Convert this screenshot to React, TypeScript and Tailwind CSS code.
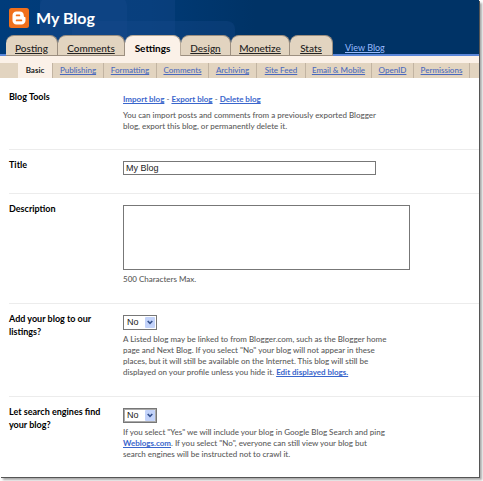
import { useState, type ReactNode } from "react";
import clsx from "clsx";

const tabs = [
  { label: "Posting", width: "w-[52px]" },
  { label: "Comments", width: "w-[67px]" },
  { label: "Settings", width: "w-[56px]" },
  { label: "Design", width: "w-[50px]" },
  { label: "Monetize", width: "w-[59px]" },
  { label: "Stats", width: "w-[43px]" },
];

const subTabs = [
  { label: "Basic", width: "w-[35px]" },
  { label: "Publishing", width: "w-[51px]" },
  { label: "Formatting", width: "w-[53px]" },
  { label: "Comments", width: "w-[52px]" },
  { label: "Archiving", width: "w-[48px]" },
  { label: "Site Feed", width: "w-[49px]" },
  { label: "Email & Mobile", width: "w-[66px]" },
  { label: "OpenID", width: "w-[42px]" },
  { label: "Permissions", width: "w-[56px]" },
];

export default function App() {
  return (
    <div className="min-h-screen bg-[#fcfcfc] pr-1 pb-1 font-['Lato',sans-serif]">
      <div className="min-h-[calc(100vh-4px)] bg-white shadow-[1px_1px_0_#555,3px_3px_2px_#aaa]">
        <Header />
        <SubNav />
        <main className="pl-[9px]">
          <Row label="Blog Tools" first>
            <p className="text-[8px] leading-[13px] text-[#555]">
              <TextLink>Import blog</TextLink> - <TextLink>Export blog</TextLink> -{" "}
              <TextLink>Delete blog</TextLink>
            </p>
            <Hint>
              You can import posts and comments from a previously exported Blogger
              <br />
              blog, export this blog, or permanently delete it.
            </Hint>
          </Row>
          <Row label="Title" htmlFor="title">
            <input
              id="title"
              defaultValue="My Blog"
              className="block h-[14px] w-[253px] border border-[#777] px-[2px] font-['Liberation_Sans',sans-serif] text-[9px] text-[#222] outline-none"
            />
          </Row>
          <Row label="Description" htmlFor="description">
            <textarea
              id="description"
              className="block h-[65px] w-[287px] resize-none border border-[#777] p-[2px] font-['Liberation_Sans',sans-serif] text-[9px] outline-none"
            />
            <Hint>500 Characters Max.</Hint>
          </Row>
          <Row label="Add your blog to our listings?" htmlFor="listed">
            <YesNo id="listed" />
            <Hint>
              A Listed blog may be linked to from Blogger.com, such as the Blogger home
              <br />
              page and Next Blog. If you select "No" your blog will not appear in these
              <br />
              places, but it will still be available on the Internet. This blog will still be
              <br />
              displayed on your profile unless you hide it. <TextLink>Edit displayed blogs.</TextLink>
            </Hint>
          </Row>
          <Row label="Let search engines find your blog?" htmlFor="searchable">
            <YesNo id="searchable" focused />
            <Hint>
              If you select "Yes" we will include your blog in Google Blog Search and ping
              <br />
              <TextLink>Weblogs.com</TextLink>. If you select "No", everyone can still view your blog but
              <br />
              search engines will be instructed not to crawl it.
            </Hint>
          </Row>
        </main>
      </div>
    </div>
  );
}

function Header() {
  return (
    <header className="relative overflow-hidden bg-[#003366]">
      <svg className="absolute top-0 left-0 h-[54px] w-[300px]" viewBox="0 0 300 54" aria-hidden="true">
        <defs>
          <linearGradient id="glow" x1="0" x2="1">
            <stop offset="0" stopColor="#003c7b" />
            <stop offset="0.5" stopColor="#003a76" />
            <stop offset="0.85" stopColor="#003366" />
          </linearGradient>
        </defs>
        <rect width="300" height="54" fill="url(#glow)" />
        <rect x="40" y="-10" width="135" height="90" rx="10" fill="#1a4d90" fillOpacity="0.3" />
        <rect x="40" y="-4" width="87" height="80" rx="10" fill="#1a4d90" fillOpacity="0.3" />
        <rect x="72" y="21" width="163" height="60" rx="8" fill="#1a4d90" fillOpacity="0.3" />
      </svg>
      <div className="relative flex h-[35px] items-center gap-[7px] pl-[9px]">
        <Logo />
        <h1 className="text-[16px] leading-5 font-bold text-white">My Blog</h1>
      </div>
      <nav className="relative flex h-[21px] items-stretch border-b-2 border-[#5a86d8] pl-[6px]">
        {tabs.map((tab) => {
          const active = tab.label === "Settings";
          return (
            <a
              key={tab.label}
              href="#"
              className={clsx(
                "-mb-[2px] flex shrink-0 items-center justify-center rounded-t-lg border-t border-r pt-1 text-[10px] leading-4",
                tab.width,
                active
                  ? "border-[#b8aa98] bg-[#fbf1e8] font-bold text-black"
                  : "border-b border-[#9c8f80] bg-[#e2d4c0] font-medium text-[#222] underline"
              )}
            >
              {tab.label}
            </a>
          );
        })}
        <a href="#" className="ml-3 flex items-center pt-[6px] text-[9px] leading-4 whitespace-nowrap text-[#99bbff] underline">
          View Blog
        </a>
      </nav>
    </header>
  );
}

function SubNav() {
  return (
    <nav className="border-t-[7px] border-[#fbf1e8] bg-[#e2d4c0] pl-[18px]">
      <div className="flex h-[15px]">
        {subTabs.map((tab) => (
          <a
            key={tab.label}
            href="#"
            className={clsx(
              "flex shrink-0 items-center justify-center border-r border-[#c2b4a2] text-[8px] leading-[11px] whitespace-nowrap",
              tab.width,
              tab.label === "Basic" ? "bg-[#fbf1e8] font-bold text-[#222]" : "font-medium text-[#4a69bd] underline"
            )}
          >
            {tab.label}
          </a>
        ))}
      </div>
    </nav>
  );
}

function Row({
  label,
  htmlFor,
  first,
  children,
}: {
  label: string;
  htmlFor?: string;
  first?: boolean;
  children: ReactNode;
}) {
  const labelClass = "block w-[100px] text-[9px] leading-[13px] font-bold text-black";
  return (
    <section
      className={clsx("flex last:pb-0", first ? "pt-1 pb-[17px]" : "border-t border-[#ececec] pb-[18px]")}
    >
      <div className="w-[114px] shrink-0 pt-2">
        {htmlFor ? (
          <label htmlFor={htmlFor} className={labelClass}>
            {label}
          </label>
        ) : (
          <h2 className={labelClass}>{label}</h2>
        )}
      </div>
      <div className="min-w-0 flex-1 pt-[11px]">{children}</div>
    </section>
  );
}

function Hint({ children }: { children: ReactNode }) {
  return (
    <p className="mt-1 text-[8px] leading-[11px] font-medium whitespace-nowrap text-[#5a5a5a]">{children}</p>
  );
}

function TextLink({ children }: { children: ReactNode }) {
  return (
    <a href="#" className="font-bold text-[#3a66cc] underline">
      {children}
    </a>
  );
}

function YesNo({ id, focused }: { id: string; focused?: boolean }) {
  const [value, setValue] = useState("No");
  return (
    <div className="relative h-[15px] w-[34px] border border-[#777] bg-white">
      <select
        id={id}
        value={value}
        onChange={(e) => setValue(e.target.value)}
        className={clsx(
          "block h-full w-full appearance-none border pl-[2px] font-['Liberation_Sans',sans-serif] text-[9px] leading-[11px] text-[#222] outline-none",
          focused ? "border-[#aaa]" : "border-white"
        )}
      >
        <option>Yes</option>
        <option>No</option>
      </select>
      <span className="pointer-events-none absolute inset-y-[1px] right-[1px] flex w-[10px] items-center justify-center rounded-[1px] bg-[#c3d3fa]">
        <svg width="6" height="5" viewBox="0 0 6 5" aria-hidden="true">
          <path d="M0.7 1 L3 3.4 L5.3 1" fill="none" stroke="#34508c" strokeWidth="1.6" />
        </svg>
      </span>
    </div>
  );
}

function Logo() {
  return (
    <svg width="20" height="20" viewBox="0 0 20 20" aria-hidden="true">
      <rect width="20" height="20" rx="2.5" fill="#f0701c" />
      <path
        d="M7.4 3.6h3.4c2.4 0 4 1.7 4 3.8v.6c0 .6.4.9.9.9.6 0 .8.4.8.9v2.6c0 2.3-1.7 4-4 4H7.4c-2.3 0-3.9-1.7-3.9-4V7.5c0-2.2 1.6-3.9 3.9-3.9z"
        fill="#fff"
      />
      <path d="M7.6 7.4h2.8M7.6 12.4h4.8" stroke="#f0701c" strokeWidth="1.7" strokeLinecap="round" />
    </svg>
  );
}
